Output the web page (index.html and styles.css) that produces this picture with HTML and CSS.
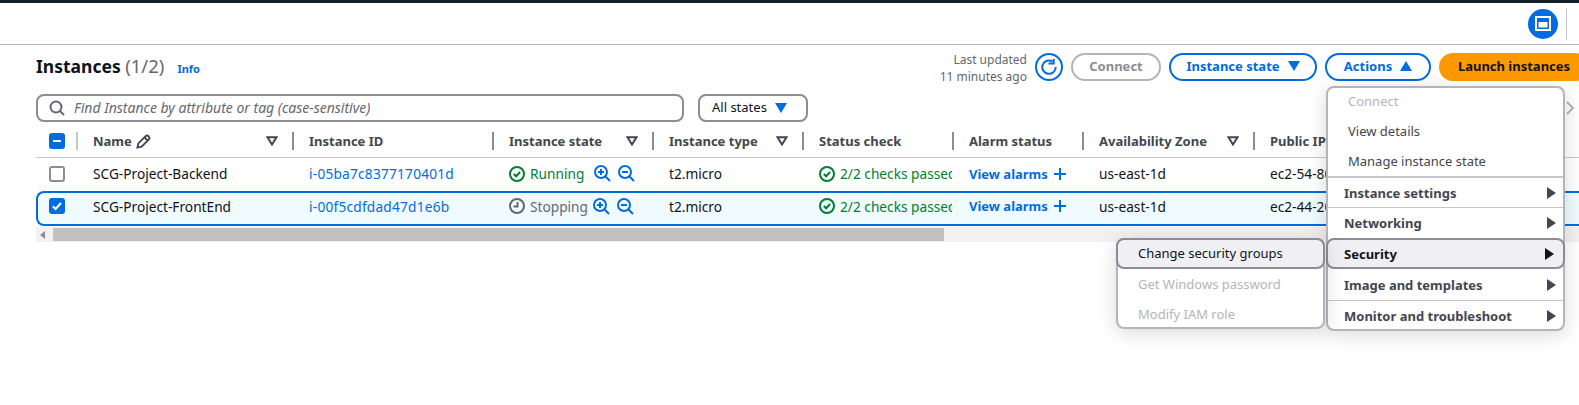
FILE: index.html
```html
<!DOCTYPE html>
<html lang="en">
<head>
	<meta charset="UTF-8">
	<title>Instances</title>
	<link rel="stylesheet" href="styles.css">
</head>
<body>
	<div class="topbar"></div>
	<div class="header">
		<span class="side-btn">
			<svg width="16" height="15" viewBox="0 0 16 15"><rect x="1" y="1" width="14" height="13" fill="none" stroke="#fff" stroke-width="2"/><rect x="3.5" y="6" width="9" height="5.5" fill="#fff"/></svg>
		</span>
		<span class="header-sep"></span>
	</div>

	<div class="content">
		<div class="title-row">
			<h1 class="title">Instances <span class="count">(1/2)</span></h1>
			<a class="info">Info</a>
			<div class="updated">Last updated<br>11 minutes ago</div>
			<button class="btn btn-refresh">
				<svg width="16" height="16" viewBox="0 0 16 16" fill="none" stroke="#006ce0" stroke-width="2"><path d="M11.5 2.4A6.7 6.7 0 1 0 14.7 8"/><path d="M7.5 4.6h5.2V0"/></svg>
			</button>
			<button class="btn btn-off">Connect</button>
			<button class="btn btn-state">Instance state <svg class="caret" width="12" height="10" viewBox="0 0 12 10"><path d="M0 0h12L6 10z"/></svg></button>
			<button class="btn btn-actions">Actions <svg class="caret" width="12" height="10" viewBox="0 0 12 10"><path d="M0 10h12L6 0z"/></svg></button>
			<button class="btn btn-launch">Launch instances</button>
		</div>

		<div class="filter-row">
			<div class="search">
				<svg width="16" height="16" viewBox="0 0 16 16" fill="none" stroke="#656871" stroke-width="2"><circle cx="7" cy="7" r="5.5"/><path d="M11 11l4 4"/></svg>
				<span class="search-text">Find Instance by attribute or tag (case-sensitive)</span>
			</div>
			<div class="states"><span class="search-label">All states</span> <svg class="caret" width="12" height="10" viewBox="0 0 12 10"><path d="M0 0h12L6 10z"/></svg></div>
			<svg class="pager" width="10" height="16" viewBox="0 0 10 16" fill="none" stroke="#b4b4bb" stroke-width="2"><path d="M2 2l6 6-6 6"/></svg>
		</div>

		<div class="table">
			<div class="row row-head">
				<div class="cell cell-check"><span class="check check-on"><svg width="16" height="16" viewBox="0 0 16 16"><path d="M4 8h8" stroke="#fff" stroke-width="2"/></svg></span></div>
				<div class="cell">Name
					<svg class="pencil" width="15" height="15" viewBox="0 0 16 16" fill="none" stroke="#424650" stroke-width="2"><path d="M1.5 14.5l1-4.5 7.5-7.5a2.1 2.1 0 0 1 3.5 3.5L6 13.5z"/><path d="M9 3.5l3.5 3.5"/></svg>
					<svg class="sort" width="12" height="10" viewBox="0 0 12 10"><path d="M1.5 1.2h9L6 8.5z"/></svg></div>
				<div class="cell">Instance ID</div>
				<div class="cell">Instance state <svg class="sort" width="12" height="10" viewBox="0 0 12 10"><path d="M1.5 1.2h9L6 8.5z"/></svg></div>
				<div class="cell">Instance type <svg class="sort" width="12" height="10" viewBox="0 0 12 10"><path d="M1.5 1.2h9L6 8.5z"/></svg></div>
				<div class="cell">Status check</div>
				<div class="cell">Alarm status</div>
				<div class="cell">Availability Zone <svg class="sort" width="12" height="10" viewBox="0 0 12 10"><path d="M1.5 1.2h9L6 8.5z"/></svg></div>
				<div class="cell">Public IPv4 DNS</div>
			</div>

			<div class="row row-one">
				<div class="cell cell-check"><span class="check"></span></div>
				<div class="cell">SCG-Project-Backend</div>
				<div class="cell"><a class="link link-id">i-05ba7c8377170401d</a></div>
				<div class="cell state ok">
					<svg width="16" height="16" viewBox="0 0 16 16" fill="none" stroke="#00802f" stroke-width="2"><circle cx="8" cy="8" r="7"/><path d="M4.8 8l2.3 2.3 4-4.3"/></svg>
					<span class="state-label">Running</span>
					<svg class="zoom-first" width="17" height="17" viewBox="0 0 17 17" fill="none" stroke="#006ce0" stroke-width="2"><circle cx="7" cy="7" r="6"/><path d="M11.5 11.5l4.5 4.5M4 7h6M7 4v6"/></svg>
					<svg class="zoom-next" width="17" height="17" viewBox="0 0 17 17" fill="none" stroke="#006ce0" stroke-width="2"><circle cx="7" cy="7" r="6"/><path d="M11.5 11.5l4.5 4.5M4 7h6"/></svg>
				</div>
				<div class="cell">t2.micro</div>
				<div class="cell status ok"><svg width="16" height="16" viewBox="0 0 16 16" fill="none" stroke="#00802f" stroke-width="2"><circle cx="8" cy="8" r="7"/><path d="M4.8 8l2.3 2.3 4-4.3"/></svg><span>2/2 checks passed</span></div>
				<div class="cell"><a class="link link-bold">View alarms</a> <svg class="plus" width="12" height="12" viewBox="0 0 12 12" stroke="#006ce0" stroke-width="2"><path d="M0 6h12M6 0v12"/></svg></div>
				<div class="cell">us-east-1d</div>
				<div class="cell">ec2-54-80-12-101</div>
			</div>

			<div class="row row-selected">
				<div class="cell cell-check"><span class="check check-on"><svg width="16" height="16" viewBox="0 0 16 16" fill="none"><path d="M3.8 8.2l2.8 2.8 5.4-6" stroke="#fff" stroke-width="2"/></svg></span></div>
				<div class="cell">SCG-Project-FrontEnd</div>
				<div class="cell"><a class="link link-id">i-00f5cdfdad47d1e6b</a></div>
				<div class="cell state pending">
					<svg width="16" height="16" viewBox="0 0 16 16" fill="none" stroke="#656871" stroke-width="2"><circle cx="8" cy="8" r="7"/><path d="M8.5 4v4.5H4.5"/></svg>
					<span class="state-label">Stopping</span>
					<svg class="zoom-first zoom-tight" width="17" height="17" viewBox="0 0 17 17" fill="none" stroke="#006ce0" stroke-width="2"><circle cx="7" cy="7" r="6"/><path d="M11.5 11.5l4.5 4.5M4 7h6M7 4v6"/></svg>
					<svg class="zoom-next" width="17" height="17" viewBox="0 0 17 17" fill="none" stroke="#006ce0" stroke-width="2"><circle cx="7" cy="7" r="6"/><path d="M11.5 11.5l4.5 4.5M4 7h6"/></svg>
				</div>
				<div class="cell">t2.micro</div>
				<div class="cell status ok"><svg width="16" height="16" viewBox="0 0 16 16" fill="none" stroke="#00802f" stroke-width="2"><circle cx="8" cy="8" r="7"/><path d="M4.8 8l2.3 2.3 4-4.3"/></svg><span>2/2 checks passed</span></div>
				<div class="cell"><a class="link link-bold">View alarms</a> <svg class="plus" width="12" height="12" viewBox="0 0 12 12" stroke="#006ce0" stroke-width="2"><path d="M0 6h12M6 0v12"/></svg></div>
				<div class="cell">us-east-1d</div>
				<div class="cell">ec2-44-20-77-198</div>
			</div>

			<div class="scrollbar">
				<svg class="scroll-arrow" width="6" height="8" viewBox="0 0 6 8"><path d="M5 0v8L0 4z"/></svg>
				<div class="scroll-thumb"></div>
			</div>
		</div>
	</div>

	<div class="menu">
		<div class="menu-item item-off item-top">Connect</div>
		<div class="menu-item">View details</div>
		<div class="menu-item">Manage instance state</div>
		<div class="menu-group group-first">Instance settings <svg width="9" height="12" viewBox="0 0 9 12"><path d="M0 0l9 6-9 6z"/></svg></div>
		<div class="menu-group">Networking <svg width="9" height="12" viewBox="0 0 9 12"><path d="M0 0l9 6-9 6z"/></svg></div>
		<div class="menu-group group-active">Security <svg width="9" height="12" viewBox="0 0 9 12"><path d="M0 0l9 6-9 6z"/></svg></div>
		<div class="menu-group group-after">Image and templates <svg width="9" height="12" viewBox="0 0 9 12"><path d="M0 0l9 6-9 6z"/></svg></div>
		<div class="menu-group">Monitor and troubleshoot <svg width="9" height="12" viewBox="0 0 9 12"><path d="M0 0l9 6-9 6z"/></svg></div>
	</div>

	<div class="submenu">
		<div class="menu-item item-active">Change security groups</div>
		<div class="menu-item item-off">Get Windows password</div>
		<div class="menu-item item-off">Modify IAM role</div>
	</div>
</body>
</html>
```

FILE: styles.css
```css
html, body {
	margin: 0;
	height: 405px;
	overflow: hidden;
	background-color: #fff;
}
body {
	position: relative;
	font-family: "Noto Sans", sans-serif;
	font-size: 13px;
	color: #0f141a;
}
.topbar {
	height: 3px;
	background-color: #161d26;
}
.header {
	height: 41px;
	border-bottom: 1px solid #b4b4bb;
	display: flex;
	justify-content: flex-end;
	align-items: center;
	padding-right: 12px;
}
.side-btn {
	width: 30px;
	height: 30px;
	border-radius: 50%;
	background-color: #006ce0;
	display: flex;
	align-items: center;
	justify-content: center;
}
.header-sep {
	width: 1px;
	height: 32px;
	background-color: #c6c6cd;
	margin-left: 8px;
}
.content {
	padding-left: 36px;
}
.title-row {
	display: flex;
	align-items: center;
	margin-top: 8px;
	margin-right: -10px;
	height: 28px;
}
.title {
	margin: 0 0 4px;
	font-size: 17.5px;
	font-weight: 700;
	white-space: nowrap;
}
.count {
	font-size: 18.5px;
	font-weight: 400;
	color: #656871;
}
.info {
	color: #006ce0;
	font-size: 11px;
	font-weight: 700;
	margin-left: 13px;
	margin-top: 2px;
}
.updated {
	margin-left: auto;
	text-align: right;
	font-size: 12px;
	line-height: 17px;
	color: #656871;
	margin-right: 8px;
	margin-top: 1px;
}
.btn {
	height: 28px;
	box-sizing: border-box;
	border-radius: 14px;
	border: 2px solid #006ce0;
	background-color: #fff;
	color: #006ce0;
	font-family: inherit;
	font-size: 13px;
	font-weight: 700;
	padding: 0 0 2px;
	margin-right: 8px;
	display: flex;
	align-items: center;
	justify-content: center;
	flex-shrink: 0;
}
.btn-refresh {
	width: 28px;
	padding: 0;
}
.btn-off {
	width: 90px;
	border-color: #b4b4bb;
	color: #8c8c94;
}
.btn-state {
	width: 148px;
	gap: 8px;
}
.btn-actions {
	width: 106px;
	gap: 8px;
}
.btn-launch {
	width: 150px;
	margin-right: 0;
	background-color: #ff9900;
	border-color: #ff9900;
	color: #0f141a;
}
.caret {
	fill: #006ce0;
}
.filter-row {
	display: flex;
	align-items: center;
	margin-top: 13px;
	height: 28px;
}
.search {
	width: 648px;
	height: 28px;
	box-sizing: border-box;
	border: 2px solid #8c8c94;
	border-radius: 8px;
	display: flex;
	align-items: center;
	gap: 9px;
	padding-left: 11px;
	font-style: italic;
	font-size: 14px;
	color: #656871;
}
.search-text, .search-label {
	margin-top: -2px;
}
.states {
	width: 110px;
	height: 28px;
	box-sizing: border-box;
	border: 2px solid #8c8c94;
	border-radius: 8px;
	margin-left: 14px;
	display: flex;
	align-items: center;
	gap: 8px;
	padding-left: 12px;
}
.pager {
	margin-left: auto;
	margin-right: 4px;
}
.table {
	margin-top: 7px;
}
.row {
	display: grid;
	grid-template-columns: 40px 216px 200px 160px 150px 150px 130px 171px 300px;
	align-items: center;
}
.row-head {
	height: 28px;
	border-bottom: 1px solid #c6c6cd;
	font-weight: 700;
	color: #424650;
	align-items: start;
}
.row-one {
	height: 33px;
	font-size: 13.7px;
	padding-bottom: 2px;
	box-sizing: border-box;
}
.row-selected {
	height: 35px;
	box-sizing: border-box;
	border: 2px solid #006ce0;
	border-right: 0;
	border-radius: 8px 0 0 8px;
	background-color: #f0fbff;
	margin-bottom: 1px;
	font-size: 13.7px;
	padding-bottom: 5px;
	grid-template-columns: 38px 216px 200px 160px 150px 150px 130px 171px 300px;
}
.cell {
	display: flex;
	align-items: center;
	padding-left: 17px;
	height: 18px;
	white-space: nowrap;
	overflow: hidden;
	position: relative;
}
.row-head .cell + .cell {
	border-left: 2px solid #8c8c94;
	padding-left: 15px;
	margin-top: 3px;
	line-height: 15px;
}
.row-head .cell-check {
	padding-left: 13px;
	margin-top: 3px;
}
.row-one .cell-check {
	padding-left: 13px;
}
.row-selected .cell-check {
	padding-left: 11px;
}
.row-head .cell-check + .cell {
	border-left-color: #c6c6cd;
}
.check {
	width: 16px;
	height: 16px;
	box-sizing: border-box;
	border: 2px solid #8c8c94;
	border-radius: 3px;
	background-color: #fff;
	display: block;
}
.check-on {
	border: 0;
	background-color: #006ce0;
}
.check svg {
	display: block;
}
.pencil {
	margin-left: 4px;
}
.sort {
	position: absolute;
	right: 14px;
	top: 4px;
	fill: none;
	stroke: #424650;
	stroke-width: 2;
}
.link {
	color: #006ce0;
}
.link-id {
	letter-spacing: 0.22px;
}
.link-bold {
	font-size: 13px;
	font-weight: 700;
}
.plus {
	margin-left: 6px;
}
.ok {
	color: #00802f;
}
.pending {
	color: #656871;
}
.state svg:first-child, .status svg:first-child {
	flex-shrink: 0;
	margin-right: 5px;
}
.state {
	height: 20px;
}
.zoom-first {
	margin-left: 10px;
}
.zoom-tight {
	margin-left: 5px;
}
.zoom-next {
	margin-left: 7px;
}
.scrollbar {
	height: 15px;
	background-color: #f1f1f1;
	display: flex;
	align-items: center;
}
.scroll-arrow {
	fill: #8c8c94;
	margin-left: 4px;
}
.scroll-thumb {
	width: 891px;
	height: 13px;
	margin-left: 7px;
	background-color: #c1c1c1;
}
.menu, .submenu {
	position: absolute;
	box-sizing: border-box;
	background-color: #fff;
	border: 2px solid #b4b4bb;
	border-radius: 8px;
	box-shadow: 0 4px 20px rgba(0, 7, 22, 0.15);
	color: #424650;
}
.menu {
	left: 1326px;
	top: 86px;
	width: 239px;
	height: 245px;
}
.submenu {
	left: 1116px;
	top: 238px;
	width: 209px;
	height: 91px;
}
.menu-item {
	height: 30px;
	display: flex;
	align-items: center;
	padding-left: 20px;
}
.item-top {
	height: 28px;
	box-sizing: border-box;
	padding-bottom: 2px;
}
.item-off {
	color: #b4b4bb;
}
.item-active {
	height: 31px;
	margin: -2px -2px 0;
	box-sizing: border-box;
	background-color: #f0f0f4;
	border: 2px solid #8c8c94;
	border-radius: 8px;
	color: #0f141a;
	padding: 0 0 1px 20px;
}
.menu-group {
	height: 31px;
	display: flex;
	align-items: center;
	justify-content: space-between;
	padding: 0 7px 0 16px;
	font-weight: 700;
	border-top: 1px solid #c6c6cd;
	box-sizing: border-box;
}
.menu-group svg {
	fill: #424650;
}
.group-first {
	border-top: 2px solid #c6c6cd;
}
.group-active {
	margin: 0 -2px;
	padding-right: 9px;
	padding-left: 16px;
	border: 2px solid #8c8c94;
	border-radius: 8px;
	background-color: #f0f0f4;
	color: #0f141a;
}
.group-active svg {
	fill: #0f141a;
}
.group-after {
	border-top: 0;
}
```
